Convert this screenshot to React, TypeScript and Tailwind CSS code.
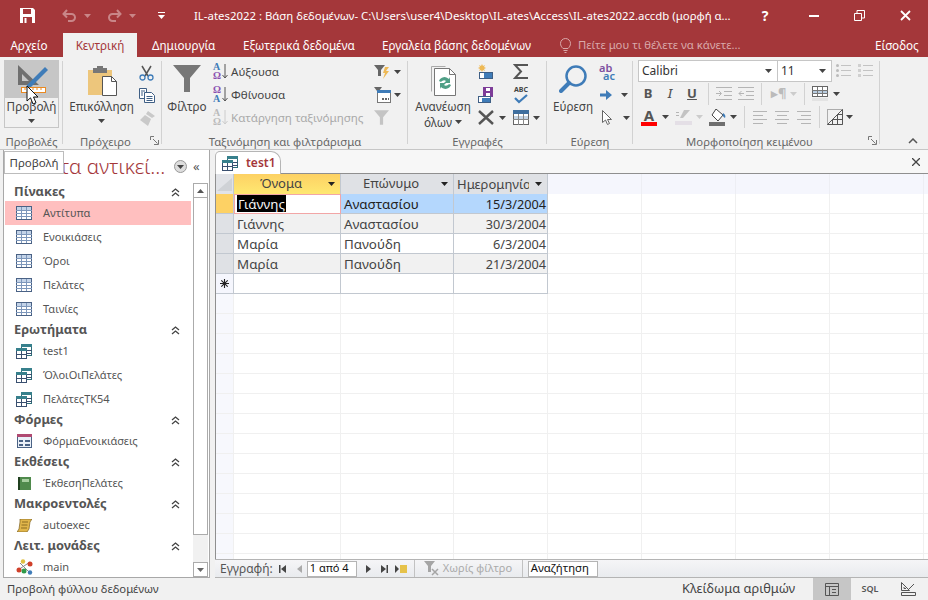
import { ReactNode } from "react";

const font = "font-['Noto_Sans','Open_Sans',sans-serif]";

const Caret = ({ color = "#444" }: { color?: string }) => (
  <svg width="7" height="4" viewBox="0 0 7 4" className="shrink-0">
    <path d="M0 0h7L3.5 4z" fill={color} />
  </svg>
);

const Launcher = () => (
  <svg width="9" height="9" viewBox="0 0 9 9" fill="none" stroke="#777">
    <path d="M.5 4V.5H4M4 8.500h4.500V4M3 3l4.500 4.500" />
  </svg>
);

const Sep = ({ h = "h-[22px]" }: { h?: string }) => <div className={`w-px bg-[#d2d2d2] ${h}`} />;

/* ---------- ribbon icons ---------- */

const SaveIcon = () => (
  <svg width="15" height="15" viewBox="0 0 15 15">
    <path d="M0 0h13l2 2v13H0z" fill="#fff" />
    <path d="M3 1h8v5H3z" fill="#a4373a" />
    <path d="M3 9h9v6H3z" fill="#a4373a" />
    <path d="M4.500 10h2v5h-2z" fill="#fff" />
  </svg>
);

const UndoIcon = ({ flip }: { flip?: boolean }) => (
  <svg width="15" height="14" viewBox="0 0 15 14" fill="none" stroke="#c98688" strokeWidth="2" className={flip ? "-scale-x-100" : ""}>
    <path d="M5 1 1.500 5 5 8.500M2 5h7.500a3.500 3.500 0 0 1 0 7H6" />
  </svg>
);

const ViewIcon = () => (
  <svg width="34" height="28" viewBox="0 0 34 28">
    <path fillRule="evenodd" d="M2 0V20H23zM6 9v7h7z" fill="#6f6f6f" />
    <path d="M11 20 29 2l3 3L14 23l-4 1z" fill="#3f7cb8" />
    <rect x="5.500" y="22.500" width="24" height="5" fill="#fff" stroke="#ea8a22" />
    <path d="M9 23v2M13 23v2M17 23v2M21 23v2M25 23v2" stroke="#ea8a22" />
  </svg>
);

const Cursor = () => (
  <svg width="14" height="21" viewBox="0 0 14 21">
    <path d="M1 1v15l3.500-3.200L7 19l3-1.300-2.500-5.700H12z" fill="#fff" stroke="#111" />
  </svg>
);

const PasteIcon = () => (
  <svg width="29" height="30" viewBox="0 0 29 30">
    <path d="M0 4h24v25H0z" fill="#edc67c" />
    <path d="M5 2h4V0h6v2h4v5H5z" fill="#777" />
    <path d="M14.500 10.500h9l5 5v14h-14z" fill="#fff" stroke="#555" />
    <path d="M23.500 10.500v5h5" fill="none" stroke="#555" />
  </svg>
);

const Scissors = () => (
  <svg width="15" height="16" viewBox="0 0 15 16" fill="none">
    <path d="M3 1l6 10M12 1 6 11" stroke="#555" strokeWidth="1.500" />
    <circle cx="3.500" cy="12.500" r="2.500" stroke="#3f7cb8" strokeWidth="1.300" />
    <circle cx="11.500" cy="12.500" r="2.500" stroke="#3f7cb8" strokeWidth="1.300" />
  </svg>
);

const CopyIcon = () => (
  <svg width="16" height="15" viewBox="0 0 16 15" fill="#fff" stroke="#3f5f85">
    <path d="M.5.500h7v10h-7z" />
    <path d="M5.500 4.500h7l3 3v7h-10z" />
    <path d="M2 3h4M2 5h2M2 7h2M7.500 8.500h6M7.500 10.500h6M7.500 12.500h6" strokeWidth="1" />
  </svg>
);

const BrushIcon = () => (
  <svg width="16" height="15" viewBox="0 0 16 15">
    <path d="M9 0l7 5-3 2-6-4zM6 4l6 4-3 7-8-6z" fill="#c9c9c9" />
  </svg>
);

const Funnel = ({ w = 28, h = 27, color = "#777" }: { w?: number; h?: number; color?: string }) => (
  <svg width={w} height={h} viewBox="0 0 28 27">
    <path d="M0 0h28L17 13v14h-6V13z" fill={color} />
  </svg>
);

const SortIcon = ({ down, grey }: { down?: boolean; grey?: boolean }) => {
  const blue = grey ? "#bbb" : "#3f7cb8";
  const purple = grey ? "#bbb" : "#8a4fb0";
  return (
    <span className="relative flex h-[17px] w-[15px] flex-col items-start">
      <span className="text-[10px] leading-[8px] font-bold font-['Liberation_Serif',serif]" style={{ color: down ? purple : blue }}>{down ? "Ω" : "A"}</span>
      <span className="text-[10px] leading-[9px] font-bold font-['Liberation_Serif',serif]" style={{ color: down ? blue : purple }}>{down ? "A" : "Ω"}</span>
      <svg width="6" height="15" viewBox="0 0 6 15" className="absolute top-[1px] left-[9px]" fill="none" stroke={grey ? "#ccc" : "#555"}>
        <path d="M3 0v14M.5 11 3 14l2.500-3" />
      </svg>
    </span>
  );
};

const BoltFunnel = () => (
  <svg width="16" height="16" viewBox="0 0 16 16">
    <path d="M0 1h11L7 6v6H4V6z" fill="#666" />
    <path d="M11 3h4l-3 4h3l-6 8 2-6H9z" fill="#eeb955" />
  </svg>
);

const FilterForm = () => (
  <svg width="17" height="16" viewBox="0 0 17 16">
    <path d="M0 0h8L5 4v3H3V4z" fill="#666" />
    <rect x="3.500" y="3.500" width="13" height="12" fill="#fff" stroke="#777" />
    <path d="M3 3h14v3H3z" fill="#3f7cb8" />
    <path d="M8 11h2v2H8zM11 11h2v2h-2zM14 11h1v2h-1z" fill="#666" />
  </svg>
);

const RefreshIcon = () => (
  <svg width="25" height="31" viewBox="0 0 25 31">
    <path d="M.5 1.500h14M.5 1.500v25" stroke="#aaa" fill="none" />
    <path d="M3.500 3.500h15l6 6v21h-21z" fill="#fff" stroke="#777" />
    <path d="M18.500 3.500v6h6" fill="none" stroke="#777" />
    <path d="M8 16a6 6 0 0 1 10-2l1-2v6h-6l2-2a3.500 3.500 0 0 0-5 1z" fill="#4f9f86" />
    <path d="M20 20a6 6 0 0 1-10 2l-1 2v-6h6l-2 2a3.500 3.500 0 0 0 5-1z" fill="#4f9f86" />
  </svg>
);

const NewRecord = () => (
  <svg width="15" height="15" viewBox="0 0 15 15">
    <path d="M4 0l1 2 2-1-1 2 2 1-2 1 1 2-2-1-1 2-1-2-2 1 1-2-2-1 2-1-1-2 2 1z" fill="#eeb955" />
    <rect x="1.500" y="8.500" width="13" height="6" fill="#fff" stroke="#3f5f85" />
    <path d="M6 9h8v5H6z" fill="#3f7cb8" />
  </svg>
);

const SaveRecord = () => (
  <svg width="15" height="16" viewBox="0 0 15 16">
    <path d="M5 0h10v10H5z" fill="#7d3c98" />
    <path d="M8 1h4v3H8zM8 6h4v4H8z" fill="#fff" />
    <rect x=".5" y="9.500" width="12" height="6" fill="#fff" stroke="#3f5f85" />
    <path d="M4 11h8v4H4z" fill="#3f7cb8" />
  </svg>
);

const CrossIcon = () => (
  <svg width="16" height="15" viewBox="0 0 16 15" stroke="#555" strokeWidth="2.400">
    <path d="M1 1l14 13M15 1 1 14" />
  </svg>
);

const Sigma = () => (
  <svg width="16" height="15" viewBox="0 0 16 15" fill="none" stroke="#555" strokeWidth="2">
    <path d="M15 1H2l6 6.500L2 14h13" />
  </svg>
);

const Spell = () => (
  <span className="flex h-[18px] w-[16px] flex-col items-center">
    <span className="text-[7px] leading-[8px] font-bold text-[#444]">ABC</span>
    <svg width="14" height="10" viewBox="0 0 14 10" fill="none" stroke="#3f7cb8" strokeWidth="2.200">
      <path d="M1 4l4 4 8-7" />
    </svg>
  </span>
);

const MoreTable = () => (
  <svg width="16" height="15" viewBox="0 0 16 15">
    <rect x=".5" y=".5" width="15" height="14" fill="#fff" stroke="#666" />
    <path d="M0 0h16v4H0z" fill="#3f6f9f" />
    <path d="M1 6h14v3H1z" fill="#c5d5e5" />
    <path d="M0 9.500h16M5.500 4v11M10.500 4v11" stroke="#888" />
  </svg>
);

const Search = () => (
  <svg width="28" height="28" viewBox="0 0 28 28" fill="none" stroke="#3f7cb8">
    <circle cx="17" cy="11" r="9.500" strokeWidth="2.500" />
    <path d="M10 18 2 26" strokeWidth="4" strokeLinecap="round" />
  </svg>
);

const ArrowGo = () => (
  <svg width="12" height="10" viewBox="0 0 12 10" fill="#3f7cb8">
    <path d="M0 3.500h6V0l6 5-6 5V6.500H0z" />
  </svg>
);

const SelectArrow = () => (
  <svg width="10" height="15" viewBox="0 0 10 15">
    <path d="M.5.500v12l3-2.500 2 4.500 2-1-2-4h4z" fill="#fff" stroke="#666" />
  </svg>
);

const Lines = ({ kind }: { kind: "left" | "center" | "right" }) => {
  const d = {
    left: "M0 .5h14M0 4.500h10M0 8.500h14M0 12.500h10",
    center: "M0 .5h14M2 4.500h10M0 8.500h14M2 12.500h10",
    right: "M0 .5h14M4 4.500h10M0 8.500h14M4 12.500h10",
  }[kind];
  return (
    <svg width="14" height="13" viewBox="0 0 14 13" fill="none" stroke="#b5b5b5">
      <path d={d} />
    </svg>
  );
};

const Indent = ({ out }: { out?: boolean }) => (
  <svg width="16" height="13" viewBox="0 0 16 13" fill="none" stroke="#b5b5b5">
    <path d="M0 .5h16M8 4.500h8M8 8.500h8M0 12.500h16" />
    <path d={out ? "M6 6.500H1M3.500 4 1 6.500 3.500 9" : "M0 6.500h5M3 4l2.500 2.500L3 9"} />
  </svg>
);

const BulletList = ({ numbered }: { numbered?: boolean }) => (
  <svg width="15" height="15" viewBox="0 0 15 15">
    <path d="M5 2.500h10M5 7.500h10M5 12.500h10" stroke="#c3c3c3" />
    {numbered ? (
      <path d="M0 1h3v3H0zM0 6h3v3H0zM0 11h3v3H0z" fill="#d0d0d0" />
    ) : (
      <>
        <circle cx="1.500" cy="2.500" r="1.500" fill="#bbb" />
        <circle cx="1.500" cy="7.500" r="1.500" fill="#bbb" />
        <circle cx="1.500" cy="12.500" r="1.500" fill="#bbb" />
      </>
    )}
  </svg>
);

const Gridlines = () => (
  <svg width="16" height="16" viewBox="0 0 16 16">
    <rect x=".5" y=".5" width="15" height="10" fill="#fff" stroke="#666" />
    <path d="M1 4h14v3H1z" fill="#b9cde0" />
    <path d="M0 4.500h16M0 7.500h16M5.500 1v9M10.500 1v9" stroke="#777" />
    <path d="M0 12h16v3H0z" fill="#e3e3e3" />
  </svg>
);

const DiagGrid = () => (
  <svg width="16" height="16" viewBox="0 0 16 16" fill="none">
    <path d="M.5.500h15v15H.5z" stroke="#666" strokeDasharray="1 1" />
    <path d="M.5 15.500 15.500.5M15.500.5v15H.5M5.500 10v5M10.500 5v10M5.500 10.500h10M10.500 5.500h5" stroke="#555" />
  </svg>
);

const FontColor = () => (
  <span className="flex w-[16px] flex-col items-center">
    <span className="text-[15px] leading-[12px] font-bold text-[#555]">A</span>
    <span className="mt-[1px] h-[4px] w-[16px] bg-[#ff0000]" />
  </span>
);

const Highlight = () => (
  <svg width="17" height="16" viewBox="0 0 17 16">
    <path d="M9 1l6 0-7 8H5z" fill="#c3c3c3" />
    <path d="M0 12h17v4H0z" fill="#e4dfe6" />
    <path d="M1 3h3v1H1zM1 6h3v1H1z" fill="#b5b5b5" />
  </svg>
);

const Bucket = () => (
  <svg width="17" height="17" viewBox="0 0 17 17">
    <path d="M7 0l7 6-5 6-6-6z" fill="#fff" stroke="#444" />
    <path d="M14 4c2 1 3 3 2 5-2-1-3-3-2-5z" fill="#3f7cb8" />
    <path d="M0 13h16v4H0z" fill="#6f6f6f" />
  </svg>
);

/* ---------- navigation pane icons ---------- */

const TableIcon = () => (
  <svg width="16" height="14" viewBox="0 0 16 14">
    <rect x=".5" y=".5" width="15" height="13" fill="#fff" stroke="#4a6285" />
    <path d="M1 1h14v3H1z" fill="#c3d3e8" />
    <path d="M0 4.500h16M0 7.500h16M0 10.500h16M5.500 1v12M10.500 1v12" stroke="#7d97bb" />
  </svg>
);

const QueryIcon = () => (
  <svg width="16" height="15" viewBox="0 0 16 15">
    <rect x="5.500" y=".5" width="10" height="11" fill="#fff" stroke="#2f6f7a" />
    <path d="M5 0h11v3H5z" fill="#37808c" />
    <rect x=".5" y="4.500" width="10" height="10" fill="#fff" stroke="#3a5070" />
    <path d="M0 4h11v3H0z" fill="#37808c" />
    <path d="M0 10.500h11M5.500 7v8M11 6.500h5M11 9.500h5" stroke="#3a5070" />
  </svg>
);

const FormIcon = () => (
  <svg width="15" height="14" viewBox="0 0 15 14">
    <rect x=".5" y=".5" width="14" height="13" fill="#eaf0f8" stroke="#4a6285" />
    <path d="M0 0h15v3H0z" fill="#b04a72" />
    <path d="M2 6h4v2H2zM2 10h4v2H2zM8 6h5v2H8zM8 10h5v2H8z" fill="#4a6285" />
  </svg>
);

const ReportIcon = () => (
  <svg width="13" height="13" viewBox="0 0 13 13">
    <path d="M0 0h13v13H0z" fill="#4f8a4c" />
    <path d="M0 0h2v13H0z" fill="#20401f" />
    <path d="M4 2h7v3H4z" fill="#a7cfa0" />
  </svg>
);

const MacroIcon = () => (
  <svg width="15" height="13" viewBox="0 0 15 13">
    <path d="M3 0h12l-2 3-1 7-2 3H0l2-3 1-7z" fill="#e1b64a" stroke="#7c6020" strokeWidth=".7" />
    <path d="M5 3h6M4.500 6h6M4 9h6" stroke="#8c6d20" />
  </svg>
);

const ModuleIcon = () => (
  <svg width="17" height="16" viewBox="0 0 17 16">
    <path d="M2 11 14 3M4 4l9 9" stroke="#888" />
    <circle cx="3" cy="11" r="2.500" fill="#d0402a" />
    <circle cx="14" cy="5" r="2.500" fill="#d0402a" />
    <circle cx="7" cy="2.500" r="2.200" fill="#e0c040" />
    <circle cx="8" cy="12" r="2.500" fill="#2f9a4a" />
    <circle cx="14" cy="13.500" r="2.200" fill="#3f7cb8" />
  </svg>
);

const ChevUp = () => (
  <svg width="9" height="9" viewBox="0 0 9 9" fill="none" stroke="#444" strokeWidth="1.300">
    <path d="M1 4l3.500-3L8 4M1 8l3.500-3L8 8" />
  </svg>
);

const navSections: { title: string; icon: ReactNode; items: string[] }[] = [
  { title: "Πίνακες", icon: <TableIcon />, items: ["Αντίτυπα", "Ενοικιάσεις", "Όροι", "Πελάτες", "Ταινίες"] },
  { title: "Ερωτήματα", icon: <QueryIcon />, items: ["test1", "ΌλοιΟιΠελάτες", "ΠελάτεςΤΚ54"] },
  { title: "Φόρμες", icon: <FormIcon />, items: ["ΦόρμαΕνοικιάσεις"] },
  { title: "Εκθέσεις", icon: <ReportIcon />, items: ["ΈκθεσηΠελάτες"] },
  { title: "Μακροεντολές", icon: <MacroIcon />, items: ["autoexec"] },
  { title: "Λειτ. μονάδες", icon: <ModuleIcon />, items: ["main"] },
];

const rows = [
  { name: "Γιάννης", last: "Αναστασίου", date: "15/3/2004" },
  { name: "Γιάννης", last: "Αναστασίου", date: "30/3/2004" },
  { name: "Μαρία", last: "Πανούδη", date: "6/3/2004" },
  { name: "Μαρία", last: "Πανούδη", date: "21/3/2004" },
];

const extraCols = [0, 1, 2, 3, 4];
const blankRows = Array.from({ length: 14 }, (_, i) => i);

const BlankCells = () => (
  <>
    {extraCols.map((c) => (
      <div key={c} className="h-full w-[94px] shrink-0 border-r border-[#f0f0f0]" />
    ))}
  </>
);

const Group = ({ w, label, launcher, children }: { w: string; label: string; launcher?: boolean; children: ReactNode }) => (
  <div className={`relative flex h-full shrink-0 flex-col ${w}`}>
    <div className="flex h-[75px] shrink-0">{children}</div>
    <div className={`flex flex-1 items-center justify-center pt-[1px] text-[11.300px] leading-none whitespace-nowrap text-[#666] ${launcher ? "pr-[14px]" : ""}`}>{label}</div>
    {launcher && (
      <span className="absolute right-[3px] bottom-[3px] flex">
        <Launcher />
      </span>
    )}
    <span className="absolute top-[2px] right-0 bottom-[4px] w-px bg-[#d2d2d2]" />
  </div>
);

const BigLabel = ({ children }: { children: ReactNode }) => (
  <span className="block text-[11.700px] leading-[16px] whitespace-nowrap text-[#444]">{children}</span>
);

const SmallRow = ({ children, className = "" }: { children: ReactNode; className?: string }) => (
  <div className={`flex h-[23px] items-center ${className}`}>{children}</div>
);

export default function App() {
  return (
    <div className={`flex h-[600px] w-[928px] flex-col overflow-hidden bg-[#f1f1f1] ${font}`}>
      {/* title bar */}
      <div className="flex h-[31px] shrink-0 items-center bg-[#a4373a] text-white">
        <span className="ml-[20px] flex"><SaveIcon /></span>
        <span className="ml-[27px] flex"><UndoIcon /></span>
        <span className="ml-[7px] flex"><Caret color="#c98688" /></span>
        <span className="ml-[16px] flex"><UndoIcon flip /></span>
        <span className="ml-[7px] flex"><Caret color="#c98688" /></span>
        <span className="ml-[22px] flex flex-col items-center gap-[2px]">
          <span className="h-px w-[7px] bg-white" />
          <Caret color="#fff" />
        </span>
        <span className="ml-[29px] w-[560px] text-[11.400px] whitespace-nowrap">IL-ates2022 : Βάση δεδομένων- C:\Users\user4\Desktop\IL-ates\Access\IL-ates2022.accdb (μορφή α...</span>
        <span className="w-[22px] text-center text-[14px] font-bold">?</span>
        <span className="ml-[33px] h-[2px] w-[10px] bg-white" />
        <span className="ml-[35px] flex">
          <svg width="11" height="11" viewBox="0 0 11 11" fill="none" stroke="#fff">
            <path d="M.5 3.500h7v7h-7zM3 3V.5h7.500V8H8" />
          </svg>
        </span>
        <span className="ml-[35px] flex">
          <svg width="11" height="11" viewBox="0 0 11 11" stroke="#fff" strokeWidth="1.800">
            <path d="M1 1l9 9M10 1l-9 9" />
          </svg>
        </span>
      </div>

      {/* tabs */}
      <div className="flex h-[26px] shrink-0 items-end bg-[#a4373a] text-[11.700px] leading-[24px] text-white">
        <span className="flex h-[24px] w-[63px] justify-center pr-[5px]">Αρχείο</span>
        <span className="flex h-[24px] w-[74px] justify-center bg-[#f1f1f1] text-[#a4373a]">Κεντρική</span>
        <span className="ml-[15px] h-[24px] w-[63px] whitespace-nowrap">Δημιουργία</span>
        <span className="ml-[28px] h-[24px] w-[110px] whitespace-nowrap">Εξωτερικά δεδομένα</span>
        <span className="ml-[29px] h-[24px] w-[150px] whitespace-nowrap">Εργαλεία βάσης δεδομένων</span>
        <span className="ml-[28px] flex h-[24px] w-[190px] items-center text-[11.300px] whitespace-nowrap text-[#d9a9aa]">
          <svg width="11" height="15" viewBox="0 0 11 15" fill="none" stroke="#d9a9aa" className="mr-[7px]">
            <path d="M3 10.500C1.500 9 .5 7.500 .5 5.500a5 5 0 0 1 10 0c0 2-1 3.500-2.500 5zM3.500 12.500h4M4.500 14.500h2" />
          </svg>
          Πείτε μου τι θέλετε να κάνετε...
        </span>
        <span className="ml-[125px] h-[24px] whitespace-nowrap">Είσοδος</span>
      </div>

      {/* ribbon */}
      <div className="flex h-[93px] shrink-0 border-b border-[#c6c6c6] pt-[2px] pb-[1px]">
        <Group w="w-[63px]" label="Προβολές">
          <div className="relative mt-px ml-[4px] flex h-[68px] w-[55px] flex-col items-center border border-[#c6c6c6]">
            <div className="flex h-[37px] w-full shrink-0 justify-center bg-[#c6c6c6] pt-[4px] pl-[2px]">
              <ViewIcon />
            </div>
            <BigLabel>Προβολή</BigLabel>
            <span className="mt-[5px] flex"><Caret /></span>
            <span className="absolute top-[24px] left-[21px] flex"><Cursor /></span>
          </div>
        </Group>

        <Group w="w-[99px]" label="Πρόχειρο" launcher>
          <div className="ml-[7px] flex w-[63px] flex-col items-center pt-[7px]">
            <span className="ml-[2px] flex h-[32px]"><PasteIcon /></span>
            <BigLabel>Επικόλληση</BigLabel>
            <span className="mt-[5px] flex"><Caret /></span>
          </div>
          <div className="ml-[6px] flex flex-col pt-[2px]">
            <SmallRow><Scissors /></SmallRow>
            <SmallRow><CopyIcon /></SmallRow>
            <SmallRow><BrushIcon /></SmallRow>
          </div>
        </Group>

        <Group w="w-[246px]" label="Ταξινόμηση και φιλτράρισμα">
          <div className="ml-[6px] flex w-[38px] flex-col items-center pt-[6px]">
            <span className="flex h-[33px]"><Funnel /></span>
            <BigLabel>Φίλτρο</BigLabel>
          </div>
          <div className="ml-[7px] flex w-[158px] flex-col pt-[1px] text-[11.600px] text-[#444]">
            <SmallRow className="gap-[3px]"><SortIcon /> Αύξουσα</SmallRow>
            <SmallRow className="gap-[3px]"><SortIcon down /> Φθίνουσα</SmallRow>
            <SmallRow className="gap-[3px] whitespace-nowrap text-[#aaa]"><SortIcon grey /> Κατάργηση ταξινόμησης</SmallRow>
          </div>
          <div className="ml-[3px] flex flex-col pt-[1px]">
            <SmallRow className="gap-[4px]"><BoltFunnel /><Caret /></SmallRow>
            <SmallRow className="gap-[3px]"><FilterForm /><Caret /></SmallRow>
            <SmallRow><Funnel w={15} h={15} color="#c4c4c4" /></SmallRow>
          </div>
        </Group>

        <Group w="w-[139px]" label="Εγγραφές">
          <div className="ml-[6px] flex w-[58px] flex-col items-center pt-[6px]">
            <span className="flex h-[33px]"><RefreshIcon /></span>
            <BigLabel>Ανανέωση</BigLabel>
            <span className="flex items-center gap-[3px]"><BigLabel>όλων</BigLabel><Caret /></span>
          </div>
          <div className="ml-[6px] flex w-[35px] flex-col pt-[1px]">
            <SmallRow><NewRecord /></SmallRow>
            <SmallRow><SaveRecord /></SmallRow>
            <SmallRow className="gap-[5px]"><CrossIcon /><Caret /></SmallRow>
          </div>
          <div className="flex flex-col pt-[1px]">
            <SmallRow><Sigma /></SmallRow>
            <SmallRow><Spell /></SmallRow>
            <SmallRow className="gap-[4px]"><MoreTable /><Caret /></SmallRow>
          </div>
        </Group>

        <Group w="w-[86px]" label="Εύρεση">
          <div className="ml-[6px] flex w-[40px] flex-col items-center pt-[6px]">
            <span className="flex h-[33px]"><Search /></span>
            <BigLabel>Εύρεση</BigLabel>
          </div>
          <div className="ml-[6px] flex flex-col pt-[1px]">
            <SmallRow>
              <span className="flex flex-col text-[11px] leading-[8px] font-semibold">
                <span className="text-[#7d4fa0]">ab</span>
                <span className="pl-[4px] text-[#3f7cb8]">ac</span>
              </span>
            </SmallRow>
            <SmallRow className="gap-[9px] pl-px"><ArrowGo /><Caret /></SmallRow>
            <SmallRow className="gap-[11px] pl-[3px]"><SelectArrow /><Caret /></SmallRow>
          </div>
        </Group>

        <Group w="w-[247px]" label="Μορφοποίηση κειμένου" launcher>
          <div className="flex flex-col pt-px pl-[5px]">
            <div className="flex h-[22px] items-start">
              <div className="flex h-[22px] w-[140px] items-center justify-between border border-[#c6c6c6] bg-white pr-[5px] pl-[3px] text-[12px] text-[#333]">
                Calibri <Caret />
              </div>
              <div className="flex h-[22px] w-[54px] items-center justify-between border border-l-0 border-[#c6c6c6] bg-white pr-[5px] pl-[3px] text-[12px] text-[#333]">
                11 <Caret />
              </div>
              <span className="ml-[4px] flex pt-[3px]"><BulletList /></span>
              <span className="ml-[7px] flex pt-[3px]"><BulletList numbered /></span>
            </div>
            <div className="flex h-[23px] items-center">
              <span className="ml-[4px] w-[12px] text-center text-[13px] leading-none font-bold text-[#555]">B</span>
              <span className="ml-[10px] w-[12px] text-center text-[13px] leading-none font-medium text-[#555] italic">I</span>
              <span className="ml-[10px] w-[12px] text-center text-[13px] leading-none font-bold text-[#555] underline">U</span>
              <span className="ml-[10px] flex"><Sep /></span>
              <span className="ml-[7px] flex"><Indent /></span>
              <span className="ml-[6px] flex"><Indent out /></span>
              <span className="ml-[7px] flex"><Sep /></span>
              <span className="ml-[9px] w-[19px] text-[13px] leading-none font-bold whitespace-nowrap text-[#bbb]">▸¶</span>
              <span className="flex"><Caret color="#ccc" /></span>
              <span className="ml-[7px] flex"><Sep /></span>
              <span className="ml-[7px] flex"><Gridlines /></span>
              <span className="ml-[5px] flex"><Caret /></span>
            </div>
            <div className="flex h-[24px] items-center">
              <span className="ml-[3px] flex"><FontColor /></span>
              <span className="ml-[5px] flex"><Caret /></span>
              <span className="ml-[6px] flex"><Highlight /></span>
              <span className="ml-[4px] flex"><Caret color="#ccc" /></span>
              <span className="ml-[6px] flex"><Bucket /></span>
              <span className="ml-[4px] flex"><Caret /></span>
              <span className="ml-[7px] flex"><Sep /></span>
              <span className="ml-[8px] flex"><Lines kind="left" /></span>
              <span className="ml-[8px] flex"><Lines kind="center" /></span>
              <span className="ml-[8px] flex"><Lines kind="right" /></span>
              <span className="ml-[8px] flex"><Sep /></span>
              <span className="ml-[7px] flex"><DiagGrid /></span>
              <span className="ml-[3px] flex"><Caret /></span>
            </div>
          </div>
        </Group>

        <div className="flex flex-1 items-end justify-end pr-[10px] pb-[4px]">
          <svg width="10" height="6" viewBox="0 0 10 6" fill="none" stroke="#555" strokeWidth="1.500">
            <path d="M1 5l4-4 4 4" />
          </svg>
        </div>
      </div>

      {/* main */}
      <div className="relative flex min-h-0 flex-1">
        {/* navigation pane */}
        <div className="ml-[3px] flex w-[207px] shrink-0 flex-col border-x border-b border-[#a8a8a8] bg-white">
          <div className="flex h-[33px] shrink-0 items-center bg-white">
            <span className="ml-[11px] w-[158px] text-[20.500px] leading-none font-light whitespace-nowrap text-[#a4373a]">Όλα τα αντικεί...</span>
            <span className="ml-[1px] flex h-[13px] w-[13px] items-center justify-center rounded-full border border-[#999] bg-[#ddd]">
              <Caret color="#444" />
            </span>
            <span className="ml-[6px] text-[13px] leading-none text-[#555]">«</span>
          </div>
          <div className="flex min-h-0 flex-1">
            <div className="mr-[2px] min-w-0 flex-1">
              {navSections.map((s) => (
                <div key={s.title}>
                  <div className="flex h-[18px] items-center justify-between pr-[11px] pl-[10px] text-[12.800px] font-bold text-[#555]">
                    {s.title} <ChevUp />
                  </div>
                  {s.items.map((item) => (
                    <div key={item} className={`ml-px flex h-[24px] items-center text-[11px] text-[#555] ${item === "Αντίτυπα" ? "bg-[#ffbfbf]" : ""}`}>
                      <span className="flex w-[38px] justify-center">{s.icon}</span>
                      {item}
                    </div>
                  ))}
                </div>
              ))}
            </div>
            {/* scrollbar */}
            <div className="mr-px flex w-[15px] shrink-0 flex-col bg-[#f1f1f1]">
              <div className="flex h-[15px] items-center justify-center border border-[#ababab] bg-white">
                <svg width="7" height="4" viewBox="0 0 7 4"><path d="M0 4h7L3.500 0z" fill="#555" /></svg>
              </div>
              <div className="h-[337px] border-x border-b border-[#ababab] bg-white" />
              <div className="flex-1" />
              <div className="flex h-[15px] items-center justify-center border border-[#ababab] bg-white">
                <Caret color="#666" />
              </div>
            </div>
          </div>
        </div>

        {/* tooltip */}
        <div className="absolute top-[1px] left-[4px] flex h-[23px] w-[60px] items-center justify-center border border-[#bcbcbc] bg-white text-[11.500px] text-[#444]">
          Προβολή
        </div>

        {/* document area */}
        <div className="ml-[5px] flex min-w-0 flex-1 flex-col">
          {/* document tab strip */}
          <div className="flex h-[24px] shrink-0 items-end justify-between border-b border-[#8f8f8f] bg-[#f7f7f7]">
            <div className="mb-[-1px] flex h-[23px] w-[66px] items-center gap-[8px] rounded-tl-[5px] rounded-tr-[10px] border border-b-0 border-[#b5b5b5] bg-white pl-[6px] text-[12px] font-semibold text-[#a4373a]">
              <QueryIcon />
              test1
            </div>
            <span className="mr-[8px] mb-[7px] flex">
              <svg width="8" height="8" viewBox="0 0 8 8" stroke="#444" strokeWidth="1.300">
                <path d="M0 0l8 8M8 0 0 8" />
              </svg>
            </span>
          </div>

          {/* datasheet */}
          <div className="min-h-0 flex-1 overflow-hidden border-l border-[#8f8f8f] bg-white text-[13.400px] text-[#444]">
            <div className="flex h-[20px] w-[950px] items-stretch text-[13px]">
              <div className="flex w-[18px] shrink-0 items-center justify-center border-r border-[#c2c8d0] bg-[#e1e3e7]">
                <svg width="15" height="13" viewBox="0 0 15 13"><path d="M15 0v13H0z" fill="#cfd2d6" /></svg>
              </div>
              <div className="relative flex w-[107px] shrink-0 items-center justify-center border-r border-[#c2c8d0] bg-gradient-to-b from-[#fdd164] to-[#fee871] pr-[12px]">
                Όνομα
                <span className="absolute right-[5px] flex"><Caret color="#222" /></span>
              </div>
              <div className="relative flex w-[113px] shrink-0 items-center justify-center border-r border-[#c2c8d0] bg-[#dfe1e5] pr-[12px]">
                Επώνυμο
                <span className="absolute right-[5px] flex"><Caret color="#222" /></span>
              </div>
              <div className="relative w-[94px] shrink-0 overflow-hidden border-r border-[#c2c8d0] bg-[#dfe1e5] pl-[3px] leading-[20px] whitespace-nowrap">
                <span className="inline-block w-[72px] overflow-hidden align-top">Ημερομηνία</span>
                <span className="absolute top-[8px] right-[5px] flex"><Caret color="#222" /></span>
              </div>
              {extraCols.map((c) => (
                <div key={c} className="w-[94px] shrink-0 border-r border-[#edeef4] bg-[#f5f6fd]" />
              ))}
            </div>

            {rows.map((r, i) => (
              <div key={i} className={`flex h-[20px] w-[950px] items-stretch leading-[21px] ${i % 2 === 1 ? "bg-[#f1f1f1]" : "bg-white"}`}>
                <div className={`w-[18px] shrink-0 border-r border-b border-[#c2c8d0] ${i === 0 ? "bg-[#fdd164]" : "bg-[#dfe1e5]"}`} />
                {i === 0 ? (
                  <div className="w-[107px] shrink-0 border border-[#f2a6a6] bg-white pl-[2px] leading-[17px]">
                    <span className="inline-block h-[17px] bg-black px-px leading-[19px] text-[#f4f4f4]">{r.name}</span>
                  </div>
                ) : (
                  <div className="w-[107px] shrink-0 border-r border-b border-[#c2c8d0] pl-[3px]">{r.name}</div>
                )}
                <div className={`w-[113px] shrink-0 border-r border-b border-[#c2c8d0] pl-[3px] ${i === 0 ? "bg-[#b4d7fd] text-[#222]" : ""}`}>{r.last}</div>
                <div className={`w-[94px] shrink-0 border-r border-b border-[#c2c8d0] pr-px text-right text-[12.700px] ${i === 0 ? "bg-[#b4d7fd] text-[#222]" : ""}`}>{r.date}</div>
                {extraCols.map((c) => (
                  <div key={c} className="w-[94px] shrink-0 border-r border-b border-[#f0f0f0] bg-white" />
                ))}
              </div>
            ))}

            {/* new record row */}
            <div className="flex h-[20px] w-[950px] items-stretch">
              <div className="flex w-[18px] shrink-0 items-center justify-center border-r border-b border-[#c2c8d0] bg-[#f5f6fd]">
                <svg width="9" height="9" viewBox="0 0 9 9" stroke="#222" strokeWidth="1.100">
                  <path d="M4.500 0v9M0 4.500h9M1.300 1.300l6.400 6.400M7.700 1.300 1.300 7.700" />
                </svg>
              </div>
              <div className="w-[107px] shrink-0 border-r border-b border-[#c2c8d0]" />
              <div className="w-[113px] shrink-0 border-r border-b border-[#c2c8d0]" />
              <div className="w-[94px] shrink-0 border-r border-b border-[#c2c8d0]" />
              {extraCols.map((c) => (
                <div key={c} className="w-[94px] shrink-0 border-r border-b border-[#f0f0f0]" />
              ))}
            </div>

            {blankRows.map((i) => (
              <div key={i} className="flex h-[20px] w-[950px] border-b border-[#f0f0f0]">
                <div className="h-full w-[18px] shrink-0 border-r border-[#f0f0f0] bg-[#f7f8fd]" />
                <div className="h-full w-[107px] shrink-0 border-r border-[#f0f0f0]" />
                <div className="h-full w-[113px] shrink-0 border-r border-[#f0f0f0]" />
                <div className="h-full w-[94px] shrink-0 border-r border-[#f0f0f0]" />
                <BlankCells />
              </div>
            ))}
          </div>

          {/* record navigation bar */}
          <div className="flex h-[19px] shrink-0 items-center border-y border-[#b4b4b4] bg-gradient-to-b from-[#f5f5f7] to-[#e9ebee] text-[12px] text-[#555]">
            <span className="ml-[5px] whitespace-nowrap">Εγγραφή:</span>
            <span className="ml-[6px] flex"><svg width="7" height="8" viewBox="0 0 7 8" fill="#444"><path d="M0 0h1.500v8H0zM7 0v8L2 4z" /></svg></span>
            <span className="ml-[11px] flex"><svg width="5" height="8" viewBox="0 0 5 8" fill="#aaa"><path d="M5 0v8L0 4z" /></svg></span>
            <span className="ml-[5px] flex h-[16px] w-[50px] items-center border border-[#b4b4b4] bg-white pl-[2px] text-[11px] text-[#111]">1 από 4</span>
            <span className="ml-[9px] flex"><svg width="5" height="8" viewBox="0 0 5 8" fill="#444"><path d="M0 0v8l5-4z" /></svg></span>
            <span className="ml-[10px] flex"><svg width="7" height="8" viewBox="0 0 7 8" fill="#444"><path d="M0 0v8l5-4zM5.500 0H7v8H5.500z" /></svg></span>
            <span className="ml-[7px] flex"><svg width="12" height="8" viewBox="0 0 12 8"><path d="M0 0v8l4-4z" fill="#444" /><path d="M5 0h7v8H5z" fill="#e6c24a" /></svg></span>
            <span className="ml-[7px] h-full w-px bg-[#c2c2c2]" />
            <span className="ml-[9px] flex"><svg width="16" height="15" viewBox="0 0 16 15"><path d="M0 0h11L7 5v6H4V5z" fill="#a5a5a5" /><path d="M8 8l6 6M14 8l-6 6" stroke="#a5a5a5" strokeWidth="1.500" /></svg></span>
            <span className="ml-[3px] w-[69px] text-[11px] whitespace-nowrap text-[#aaa]">Χωρίς φίλτρο</span>
            <span className="ml-[10px] h-full w-px bg-[#c2c2c2]" />
            <span className="ml-[5px] flex h-[16px] w-[70px] items-center border border-[#b4b4b4] bg-white pl-[2px] text-[11.300px] text-[#111]">Αναζήτηση</span>
          </div>
        </div>
      </div>

      {/* status bar */}
      <div className="flex h-[22px] shrink-0 items-center text-[11.300px] text-[#444]">
        <span className="ml-[7px] w-[675px] whitespace-nowrap">Προβολή φύλλου δεδομένων</span>
        <span className="w-[131px] text-[12.800px] whitespace-nowrap">Κλείδωμα αριθμών</span>
        <span className="flex h-full w-[38px] items-center justify-center bg-[#c6c6c6]">
          <svg width="14" height="13" viewBox="0 0 14 13" fill="none" stroke="#555">
            <path d="M.5.500h13v12H.5zM.5 3.500h13M4.500 3.500v9M7 6.500h4M7 9.500h4" />
          </svg>
        </span>
        <span className="flex w-[38px] justify-center text-[9px] font-semibold text-[#555]">SQL</span>
        <span className="flex w-[38px] justify-center">
          <svg width="15" height="14" viewBox="0 0 15 14" fill="none" stroke="#555">
            <path d="M.5.500v8h8zM3 5v1.500h2M7 8l6-6" />
            <path d="M.5 10.500h14v3H.5z" />
          </svg>
        </span>
      </div>
    </div>
  );
}
